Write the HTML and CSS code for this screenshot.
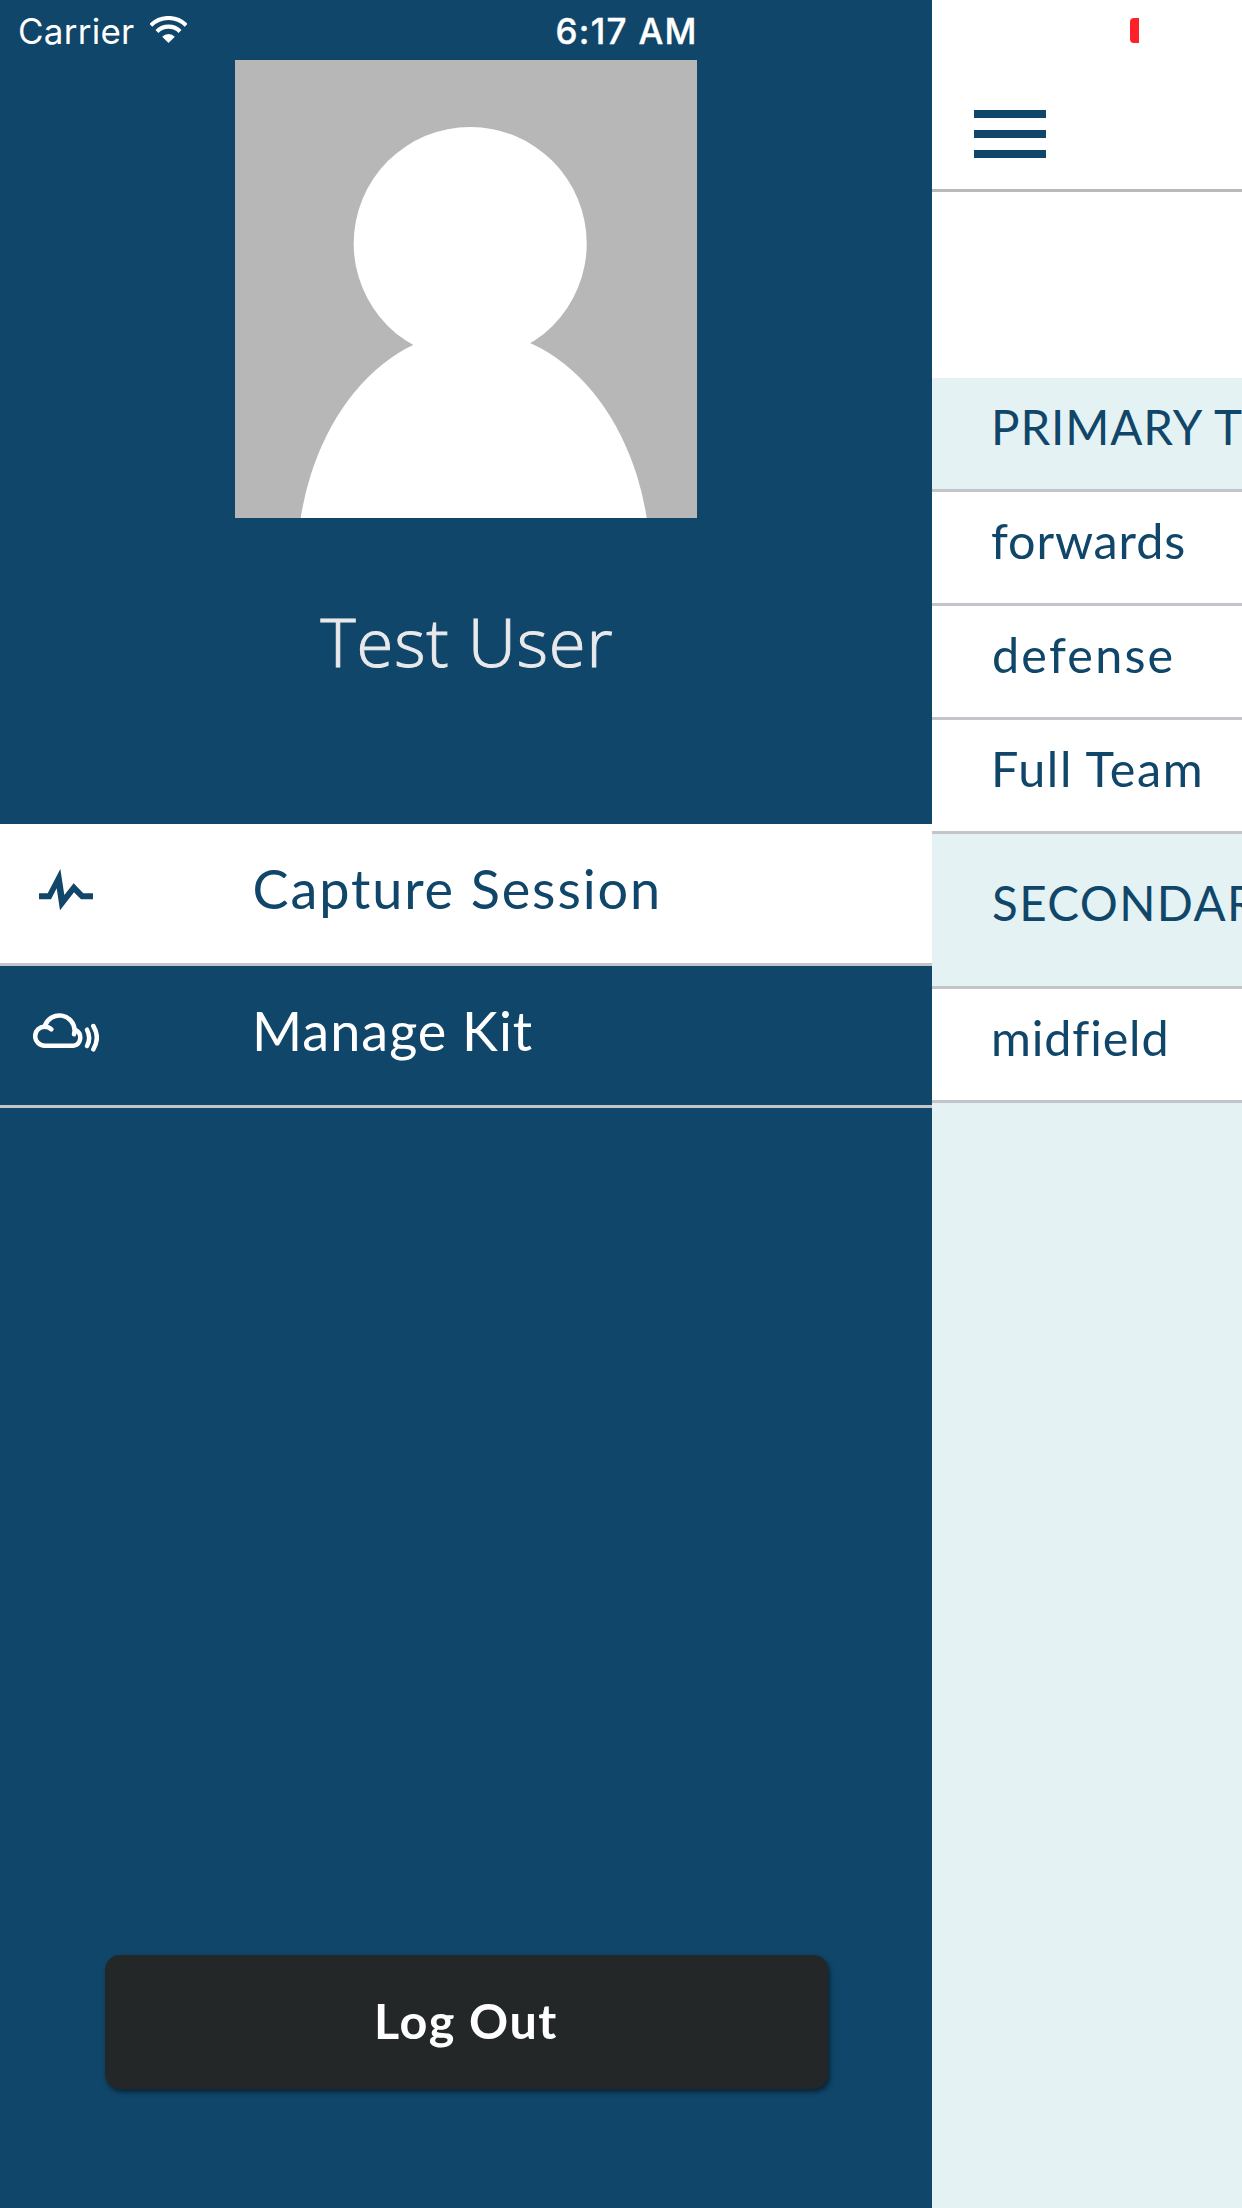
FILE: index.html
```html
<!DOCTYPE html>
<html lang="en">
<head>
<meta charset="utf-8">
<title>Menu</title>
<link rel="stylesheet" href="styles.css">
</head>
<body>
<div class="screen">
  <nav class="drawer">
    <header class="status">
      <span class="carrier">Carrier</span>
      <svg class="wifi" viewBox="450 48 110 81" fill="none" stroke="#fff" stroke-width="12.5">
        <path d="M452 76A75 75 0 0 1 558 76"/>
        <path d="M470.400 94.400A49 49 0 0 1 539.600 94.400"/>
        <path d="M486 110A27 27 0 0 1 524 110L505 129Z" fill="#fff" stroke="none"/>
      </svg>
      <time class="time">6:17 AM</time>
    </header>
    <svg class="avatar" viewBox="0 0 462 458" fill="#fff">
      <rect width="462" height="458" fill="#b7b7b7"/>
      <circle cx="235.200" cy="183.500" r="116.500"/>
      <ellipse cx="238.700" cy="505.700" rx="176.700" ry="235"/>
    </svg>
    <h1 class="name">Test User</h1>
    <ul class="menu">
      <li class="item selected">
        <span class="icon">
          <svg class="pulse" viewBox="117 176 162 124" fill="#104669">
            <path d="M117 249H143L181 176L193 254L221 219L250 249H279V267H243L222 246L180 300L170 234L153 267H117Z"/>
          </svg>
        </span>
        <span class="label capture">Capture Session</span>
      </li>
      <li class="item">
        <span class="icon">
          <svg class="cloud" viewBox="99 606 198 120" fill="none" stroke="#fff" stroke-width="13.5" stroke-linecap="round" stroke-linejoin="round">
            <path d="M154 658Q146 650 134 650A28.500 28.500 0 0 0 134 707H222A25 25 0 0 0 228 661"/>
            <path d="M135 646A46 46 0 0 1 224 661L222 673"/>
            <path d="M261 659Q274 684 261 708"/>
            <path d="M280 648Q301 683 280 718"/>
          </svg>
        </span>
        <span class="label manage">Manage Kit</span>
      </li>
    </ul>
    <button class="logout" type="button">Log Out</button>
  </nav>
  <main class="page">
    <header class="topbar">
      <div class="battery"></div>
      <div class="burger"><i></i><i></i><i></i></div>
    </header>
    <section class="list">
      <h2 class="row head primary">PRIMARY T</h2>
      <div class="row forwards">forwards</div>
      <div class="row defense">defense</div>
      <div class="row full">Full Team</div>
      <h2 class="row head secondary">SECONDAR</h2>
      <div class="row forwards">midfield</div>
    </section>
  </main>
</div>
</body>
</html>
```
FILE: styles.css
```css
* { box-sizing: border-box; margin: 0; padding: 0; }
body { font-family: Lato, "Open Sans", sans-serif; color: #104669; }
.screen { display: flex; width: 1242px; height: 2208px; overflow: hidden; }

.drawer { display: flex; flex-direction: column; align-items: center; width: 932px; height: 2208px; flex: none; background: #104669; color: #fff; }
.status { display: flex; align-items: flex-start; align-self: stretch; height: 60px; padding-left: 18px; font-family: Inter, sans-serif; font-size: 35px; line-height: 62px; white-space: nowrap; }
.carrier { width: 132px; letter-spacing: 0.250px; }
.wifi { width: 37px; height: 27px; margin-top: 16px; }
.time { margin-left: 368.500px; font-weight: 500; letter-spacing: 1.280px; -webkit-text-stroke: 0.400px; }
.avatar { display: block; width: 462px; height: 458px; flex: none; }
.name { height: 80px; margin-top: 83px; padding-left: 2px; font-family: "Open Sans", sans-serif; font-size: 67px; font-weight: 300; line-height: 80px; letter-spacing: 0.850px; color: #e9e9eb; -webkit-text-stroke: 1px #e9e9eb; }
.menu { align-self: stretch; margin-top: 143px; list-style: none; }
.item { display: flex; height: 142px; border-bottom: 3px solid #c4c4cb; }
.selected { background: #fff; color: #104669; }
.icon { width: 252px; flex: none; }
.pulse { display: block; width: 54px; height: 41.300px; margin: 44.700px 0 0 39px; }
.cloud { display: block; width: 66px; height: 40px; margin: 46px 0 0 33px; }
.label { font-size: 54px; line-height: 130px; white-space: nowrap; }
.capture { padding-left: 0.500px; letter-spacing: 1.880px; }
.manage { letter-spacing: 1px; }
.logout { width: 723px; height: 134px; margin: auto 0 119px; padding: 0 0 3px; border: 0; border-radius: 15px; background: #232728; box-shadow: 2px 3px 5px rgba(0, 0, 0, 0.500); color: #fff; font: 700 48.500px/129px Lato, sans-serif; letter-spacing: 1.500px; }

.page { flex: 1; min-width: 0; height: 2208px; overflow: hidden; background: #e4f2f3; }
.topbar { height: 192px; padding-top: 18px; border-bottom: 3px solid #b9b9b9; background: #fff; }
.battery { width: 9px; height: 25px; margin-left: 198px; border-radius: 4px 0 0 4px; background: #ff2028; }
.burger { display: flex; flex-direction: column; gap: 12px; width: 72px; margin: 67px 0 0 41.500px; }
.burger i { height: 8px; background: #104669; }
.list { padding-top: 186px; background: linear-gradient(#fff 186px, transparent 186px); }
.row { height: 114px; padding-left: 59px; border-bottom: 3px solid #c4c4cb; background: #fff; font-size: 48.500px; font-weight: 400; line-height: 97px; white-space: nowrap; overflow: hidden; }
.head { background: #e4f2f3; font-size: 47.500px; line-height: 98px; }
.primary { letter-spacing: 0.900px; word-spacing: 1px; }
.forwards { letter-spacing: 0.860px; }
.defense { padding-left: 60px; letter-spacing: 2.200px; }
.full { letter-spacing: 1.600px; }
.secondary { height: 155px; padding-left: 60px; line-height: 138px; letter-spacing: 1.400px; }
```
